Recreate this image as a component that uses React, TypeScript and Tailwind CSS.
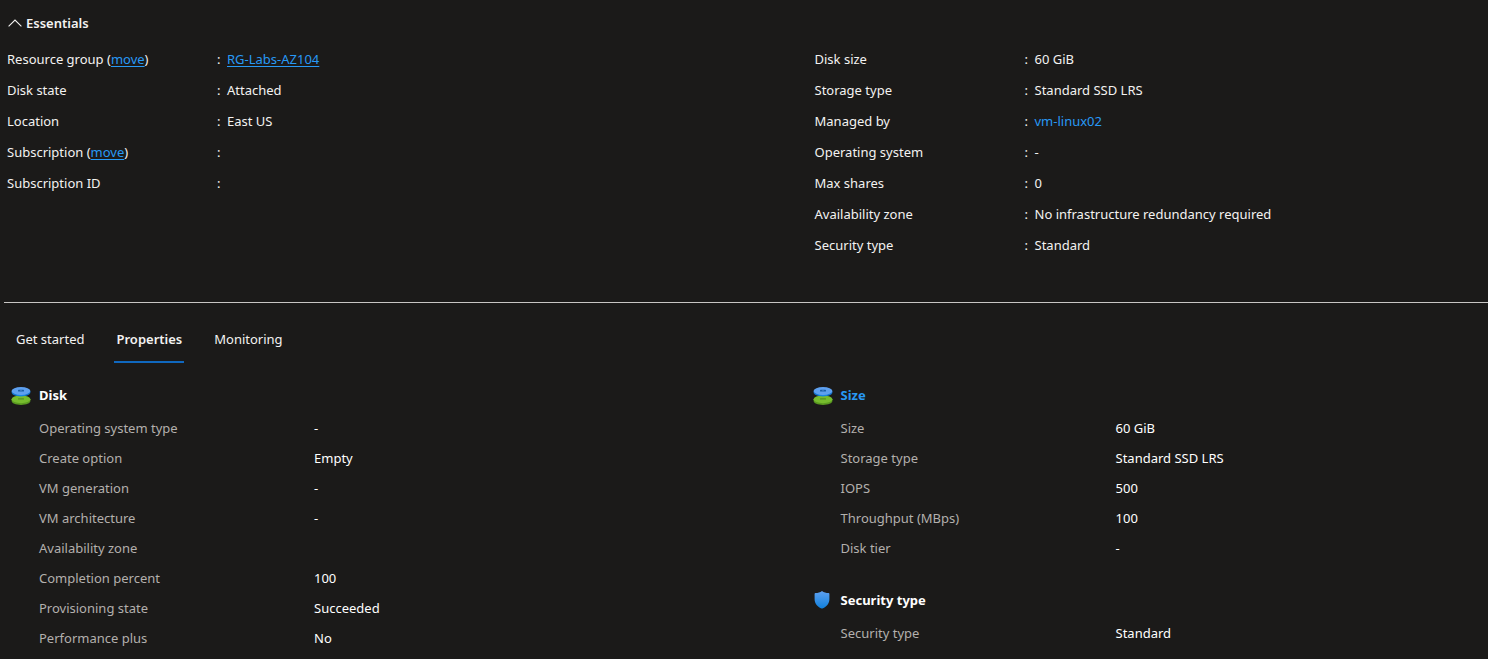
import type { ReactNode } from "react";

type Row = { label: ReactNode; value?: ReactNode };

const linkClass = "text-[#2899f5] underline underline-offset-2";

const essentialsLeft: Row[] = [
  {
    label: (
      <>
        Resource group (<a href="#move-group" className={linkClass}>move</a>)
      </>
    ),
    value: <a href="#group" className={linkClass}>RG-Labs-AZ104</a>,
  },
  { label: "Disk state", value: "Attached" },
  { label: "Location", value: "East US" },
  {
    label: (
      <>
        Subscription (<a href="#move-subscription" className={linkClass}>move</a>)
      </>
    ),
  },
  { label: "Subscription ID" },
];

const essentialsRight: Row[] = [
  { label: "Disk size", value: "60 GiB" },
  { label: "Storage type", value: "Standard SSD LRS" },
  { label: "Managed by", value: <a href="#vm" className="text-[#2899f5]">vm-linux02</a> },
  { label: "Operating system", value: "-" },
  { label: "Max shares", value: "0" },
  { label: "Availability zone", value: "No infrastructure redundancy required" },
  { label: "Security type", value: "Standard" },
];

const diskRows: Row[] = [
  { label: "Operating system type", value: "-" },
  { label: "Create option", value: "Empty" },
  { label: "VM generation", value: "-" },
  { label: "VM architecture", value: "-" },
  { label: "Availability zone" },
  { label: "Completion percent", value: "100" },
  { label: "Provisioning state", value: "Succeeded" },
  { label: "Performance plus", value: "No" },
];

const sizeRows: Row[] = [
  { label: "Size", value: "60 GiB" },
  { label: "Storage type", value: "Standard SSD LRS" },
  { label: "IOPS", value: "500" },
  { label: "Throughput (MBps)", value: "100" },
  { label: "Disk tier", value: "-" },
];

const securityRows: Row[] = [{ label: "Security type", value: "Standard" }];

function EssentialsList({ rows }: { rows: Row[] }) {
  return (
    <dl>
      {rows.map((row, i) => (
        <div key={i} className="flex h-[31px] items-center">
          <dt className="w-[210px] shrink-0">{row.label}</dt>
          <dd className="flex">
            <span className="w-[10px]">:</span>
            <span>{row.value}</span>
          </dd>
        </div>
      ))}
    </dl>
  );
}

function PropertyGroup({ icon, title, rows }: { icon: ReactNode; title: ReactNode; rows: Row[] }) {
  return (
    <section>
      <div className="flex h-9 items-center">
        <span className="flex w-7 shrink-0">{icon}</span>
        <h2 className="font-bold text-white">{title}</h2>
      </div>
      <dl className="pl-7">
        {rows.map((row, i) => (
          <div key={i} className="flex h-[30px] items-center">
            <dt className="w-[275px] shrink-0 text-[#b3b0ad]">{row.label}</dt>
            <dd className="text-white">{row.value}</dd>
          </div>
        ))}
      </dl>
    </section>
  );
}

function DiskIcon({ id }: { id: string }) {
  return (
    <svg width="20" height="20" viewBox="0 0 20 20" aria-hidden="true">
      <defs>
        <linearGradient id={`${id}-side`} x1="0" x2="1">
          <stop offset="0" stopColor="#0f6cc4" />
          <stop offset="0.5" stopColor="#1a8ae6" />
          <stop offset="1" stopColor="#0f6cc4" />
        </linearGradient>
      </defs>
      <path d="M.6 14.300v1.800c0 2.100 4.200 3.800 9.400 3.800s9.400-1.700 9.400-3.800v-1.800z" fill="#5a9a20" />
      <ellipse cx="10" cy="14.300" rx="9.400" ry="3.900" fill="#76bc2d" />
      <rect x="7" y="13.300" width="6" height="1.200" rx=".5" fill="#559120" />
      <path d="M.6 6v1.600c0 2.200 4.200 3.900 9.400 3.900s9.400-1.700 9.400-3.900V6z" fill={`url(#${id}-side)`} />
      <ellipse cx="10" cy="6" rx="9.400" ry="4" fill="#5ea0ef" />
      <rect x="7" y="4.800" width="6" height="1.800" rx=".7" fill="#1a5fa8" />
      <rect x="9.500" y="4.800" width="1" height="1.200" fill="#5090dc" />
    </svg>
  );
}

function ShieldIcon() {
  return (
    <svg width="18" height="20" viewBox="0 0 18 20" aria-hidden="true">
      <defs>
        <linearGradient id="shield-fill" x1="0" y1="0" x2="0" y2="1">
          <stop offset="0" stopColor="#5ea0ef" />
          <stop offset="1" stopColor="#0f80dc" />
        </linearGradient>
      </defs>
      <path
        d="M9 1c1.900 1.500 4 2 6.600 2.100.5 0 .8.300.8.800v5.300c0 5-3.700 7.700-7 9.300a.9.9 0 0 1-.8 0c-3.300-1.600-7-4.300-7-9.300V3.900c0-.5.300-.8.800-.8C5 3 7.100 2.500 9 1z"
        fill="url(#shield-fill)"
      />
    </svg>
  );
}

export default function App() {
  return (
    <main className="min-h-screen bg-[#1b1a19] font-['Noto_Sans','Open_Sans',sans-serif] text-[13px] leading-5 text-[#f3f2f1]">
      <section className="pt-[13px]">
        <button type="button" aria-expanded="true" className="ml-2 flex h-5 items-center gap-1 font-semibold">
          <svg width="14" height="8" viewBox="0 0 14 8" fill="none" stroke="#f3f2f1" strokeWidth="1.1" aria-hidden="true">
            <path d="M.6 7.300 7 1l6.400 6.300" />
          </svg>
          Essentials
        </button>
        <div className="mt-[10px] grid grid-cols-[54%_1fr]">
          <div className="pl-[7px]">
            <EssentialsList rows={essentialsLeft} />
          </div>
          <div className="pl-[11px]">
            <EssentialsList rows={essentialsRight} />
          </div>
        </div>
      </section>

      <hr className="mt-[42px] ml-1 border-t border-[#c8c6c4]" />

      <div role="tablist" className="mt-3 flex h-12 gap-7 pl-[14px]">
        <button type="button" role="tab" aria-selected="false" className="px-[2px]">Get started</button>
        <button type="button" role="tab" aria-selected="true" className="border-b-2 border-[#1068bf] px-[2px] pt-[2px] font-semibold">
          Properties
        </button>
        <button type="button" role="tab" aria-selected="false" className="px-[2px]">Monitoring</button>
      </div>

      <div className="mt-[14px] grid grid-cols-[54%_1fr]">
        <div className="pl-[11px]">
          <PropertyGroup icon={<DiskIcon id="disk" />} title="Disk" rows={diskRows} />
        </div>
        <div className="flex flex-col gap-[19px] pl-[9px]">
          <PropertyGroup
            icon={<DiskIcon id="size" />}
            title={<a href="#size" className="text-[#2899f5]">Size</a>}
            rows={sizeRows}
          />
          <PropertyGroup icon={<ShieldIcon />} title="Security type" rows={securityRows} />
        </div>
      </div>
    </main>
  );
}
